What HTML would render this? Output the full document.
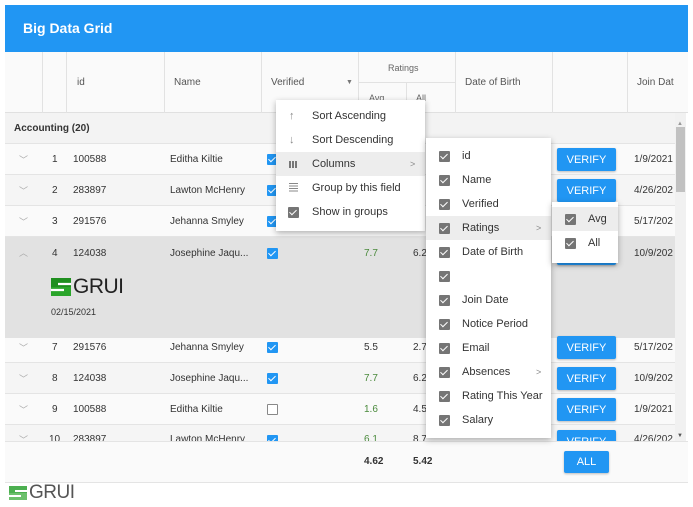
<!DOCTYPE html>
<html><head><meta charset="utf-8"><style>
*{box-sizing:border-box;margin:0;padding:0}
body{width:693px;height:507px;background:#fff;font-family:"Liberation Sans",sans-serif;font-size:10px;color:#333;position:relative;overflow:hidden}
.a{position:absolute}
.t{position:absolute;white-space:nowrap;line-height:14px}
.vl{position:absolute;width:1px;background:#e2e2e2}
.row{position:absolute;left:5px;width:670px;height:31px;border-bottom:1px solid #e4e4e4;overflow:hidden}
.cb{position:absolute;width:11px;height:11px;background:#2196f3;border-radius:1px}
.cb:after{content:"";position:absolute;left:3px;top:1px;width:3px;height:6px;border:solid #fff;border-width:0 1px 1px 0;transform:rotate(45deg)}
.cbe{position:absolute;width:11px;height:11px;border:1px solid #888;background:#fff;border-radius:1px}
.gc{position:absolute;width:11px;height:11px;background:#757575;border-radius:1px}
.gc:after{content:"";position:absolute;left:3px;top:1px;width:3px;height:6px;border:solid #fff;border-width:0 1px 1px 0;transform:rotate(45deg)}
.btn{position:absolute;left:552px;width:59px;height:23px;background:#2196f3;color:#fff;font-size:11px;line-height:24px;text-align:center;border-radius:2px;box-shadow:0 1px 2px rgba(0,0,0,.25)}
.menu{position:absolute;background:#fff;box-shadow:0 2px 6px rgba(0,0,0,.3)}
.mi{position:absolute;left:0;right:0;height:24px;font-size:11px;line-height:25px;color:#333}
</style></head><body>
<div class="a" style="left:5px;top:5px;width:683px;height:47px;background:#2196f3"></div>
<div class="t" style="left:23px;top:20px;font-size:14px;line-height:17px;font-weight:bold;color:#fff">Big Data Grid</div>
<div class="a" style="left:5px;top:52px;width:683px;height:61px;background:#fafafa;border-bottom:1px solid #e0e0e0"></div>
<div class="vl" style="left:42px;top:52px;height:61px"></div>
<div class="vl" style="left:66px;top:52px;height:61px"></div>
<div class="vl" style="left:164px;top:52px;height:61px"></div>
<div class="vl" style="left:261px;top:52px;height:61px"></div>
<div class="vl" style="left:358px;top:52px;height:61px"></div>
<div class="vl" style="left:406px;top:82px;height:31px"></div>
<div class="vl" style="left:455px;top:52px;height:61px"></div>
<div class="vl" style="left:552px;top:52px;height:61px"></div>
<div class="vl" style="left:627px;top:52px;height:61px"></div>
<div class="a" style="left:358px;top:82px;width:97px;height:1px;background:#e2e2e2"></div>
<div class="t" style="left:77px;top:76px;color:#555">id</div>
<div class="t" style="left:174px;top:76px;color:#555">Name</div>
<div class="t" style="left:271px;top:76px;color:#555">Verified</div>
<div class="t" style="left:346px;top:76px;font-size:7px;color:#777">▼</div>
<div class="t" style="left:388px;top:61px;font-size:9px;color:#666">Ratings</div>
<div class="t" style="left:369px;top:91px;font-size:9px;color:#666">Avg</div>
<div class="t" style="left:416px;top:91px;font-size:9px;color:#666">All</div>
<div class="t" style="left:465px;top:76px;color:#555">Date of Birth</div>
<div class="t" style="left:637px;top:76px;color:#555">Join Dat</div>
<div class="a" style="left:5px;top:113px;width:670px;height:31px;background:#f3f3f3;border-bottom:1px solid #e4e4e4"></div>
<div class="t" style="left:14px;top:122px;font-weight:bold;font-size:10px;color:#333">Accounting (20)</div>
<div class="row" style="top:144px;background:#fafafa"></div>
<div class="row" style="top:175px;background:#f5f5f5"></div>
<div class="row" style="top:206px;background:#fafafa"></div>
<div class="a" style="left:5px;top:237px;width:670px;height:101px;background:#e2e2e2"></div>
<div class="row" style="top:338px;background:#fafafa;height:25px"></div>
<div class="row" style="top:363px;background:#f5f5f5"></div>
<div class="row" style="top:394px;background:#fafafa"></div>
<div class="row" style="top:425px;background:#f5f5f5;height:16px;border:0"></div>

<div class="t" style="left:19px;top:153px;color:#aaa;font-size:9px">﹀</div>
<div class="t" style="left:19px;top:184px;color:#aaa;font-size:9px">﹀</div>
<div class="t" style="left:19px;top:215px;color:#aaa;font-size:9px">﹀</div>
<div class="t" style="left:19px;top:246px;color:#aaa;font-size:9px">︿</div>
<div class="t" style="left:19px;top:341px;color:#aaa;font-size:9px">﹀</div>
<div class="t" style="left:19px;top:372px;color:#aaa;font-size:9px">﹀</div>
<div class="t" style="left:19px;top:403px;color:#aaa;font-size:9px">﹀</div>

<div class="t" style="left:52px;top:153px">1</div><div class="t" style="left:73px;top:153px">100588</div><div class="t" style="left:170px;top:153px">Editha Kiltie</div><div class="cb" style="left:267px;top:154px"></div>
<div class="t" style="left:52px;top:184px">2</div><div class="t" style="left:73px;top:184px">283897</div><div class="t" style="left:170px;top:184px">Lawton McHenry</div><div class="cb" style="left:267px;top:185px"></div>
<div class="t" style="left:52px;top:215px">3</div><div class="t" style="left:73px;top:215px">291576</div><div class="t" style="left:170px;top:215px">Jehanna Smyley</div><div class="cb" style="left:267px;top:216px"></div>
<div class="t" style="left:52px;top:247px">4</div><div class="t" style="left:73px;top:247px">124038</div><div class="t" style="left:170px;top:247px">Josephine Jaqu...</div><div class="cb" style="left:267px;top:248px"></div>
<div class="t" style="left:364px;top:247px;color:#4a8a3c">7.7</div><div class="t" style="left:413px;top:247px">6.2</div>
<svg class="a" style="left:51px;top:278px" width="20" height="18"><rect width="20" height="18" fill="#2aa52a"/><rect width="20" height="9" fill="#1f8f1f"/><path d="M7 6H20M0 12H13" stroke="#fff" stroke-width="2.2"/></svg>
<div class="t" style="left:73px;top:276px;font-size:21px;line-height:22px;color:#222;letter-spacing:-0.5px">GRUI</div>
<div class="t" style="left:51px;top:305px;font-size:9px">02/15/2021</div>

<div class="t" style="left:52px;top:341px">7</div><div class="t" style="left:73px;top:341px">291576</div><div class="t" style="left:170px;top:341px">Jehanna Smyley</div><div class="cb" style="left:267px;top:342px"></div>
<div class="t" style="left:364px;top:341px">5.5</div><div class="t" style="left:413px;top:341px">2.7</div>
<div class="t" style="left:52px;top:372px">8</div><div class="t" style="left:73px;top:372px">124038</div><div class="t" style="left:170px;top:372px">Josephine Jaqu...</div><div class="cb" style="left:267px;top:373px"></div>
<div class="t" style="left:364px;top:372px;color:#4a8a3c">7.7</div><div class="t" style="left:413px;top:372px">6.2</div>
<div class="t" style="left:52px;top:403px">9</div><div class="t" style="left:73px;top:403px">100588</div><div class="t" style="left:170px;top:403px">Editha Kiltie</div><div class="cbe" style="left:267px;top:404px"></div>
<div class="t" style="left:364px;top:403px;color:#4a8a3c">1.6</div><div class="t" style="left:413px;top:403px">4.5</div>
<div class="a" style="left:5px;top:425px;width:670px;height:16px;overflow:hidden">
<div class="t" style="left:14px;top:8px;color:#aaa;font-size:9px">﹀</div>
<div class="t" style="left:44px;top:8px">10</div><div class="t" style="left:68px;top:8px">283897</div><div class="t" style="left:165px;top:8px">Lawton McHenry</div><div class="cb" style="left:262px;top:10px"></div><div class="t" style="left:359px;top:8px;color:#4a8a3c">6.1</div><div class="t" style="left:408px;top:8px">8.7</div>
<div class="btn" style="top:5px">VERIFY</div><div class="t" style="left:629px;top:8px">4/26/202</div></div>

<div class="btn" style="top:148px;left:557px">VERIFY</div><div class="t" style="left:634px;top:153px">1/9/2021</div>
<div class="btn" style="top:179px;left:557px">VERIFY</div><div class="t" style="left:634px;top:184px">4/26/202</div>
<div class="t" style="left:634px;top:215px">5/17/202</div>
<div class="btn" style="top:242px;left:557px">VERIFY</div><div class="t" style="left:634px;top:247px">10/9/202</div>
<div class="btn" style="top:336px;left:557px">VERIFY</div><div class="t" style="left:634px;top:341px">5/17/202</div>
<div class="btn" style="top:367px;left:557px">VERIFY</div><div class="t" style="left:634px;top:372px">10/9/202</div>
<div class="btn" style="top:398px;left:557px">VERIFY</div><div class="t" style="left:634px;top:403px">1/9/2021</div>

<div class="a" style="left:675px;top:113px;width:11px;height:328px;background:#f1f1f1"></div>
<div class="a" style="left:676px;top:127px;width:9px;height:65px;background:#c1c1c1"></div>
<div class="t" style="left:677px;top:117px;font-size:6px;color:#999">▲</div>
<div class="t" style="left:677px;top:429px;font-size:6px;color:#555">▼</div>

<div class="a" style="left:5px;top:441px;width:683px;height:42px;background:#fafafa;border-top:1px solid #e4e4e4;border-bottom:1px solid #e4e4e4"></div>
<div class="t" style="left:364px;top:455px;font-weight:bold">4.62</div>
<div class="t" style="left:413px;top:455px;font-weight:bold">5.42</div>
<div class="btn" style="left:564px;top:451px;width:45px;height:22px;line-height:23px">ALL</div>
<svg class="a" style="left:9px;top:486px" width="18" height="14"><rect width="18" height="14" fill="#6cc06c"/><rect width="18" height="7" fill="#4caf50"/><path d="M6 5H18M0 10H12" stroke="#fff" stroke-width="2"/></svg>
<div class="t" style="left:29px;top:483px;font-size:19px;line-height:20px;color:#555;letter-spacing:-0.5px">GRUI</div>

<div class="menu" style="left:276px;top:100px;width:149px;height:131px">
<div class="mi" style="top:4px"><span class="a" style="left:13px;color:#888">↑</span><span class="a" style="left:36px">Sort Ascending</span></div>
<div class="mi" style="top:28px"><span class="a" style="left:13px;color:#888">↓</span><span class="a" style="left:36px">Sort Descending</span></div>
<div class="mi" style="top:52px;background:#ededed"><span class="a" style="left:13px;top:9px;width:9px;height:7px;background:repeating-linear-gradient(90deg,#777 0 2px,#ededed 2px 3px)"></span><span class="a" style="left:36px">Columns</span><span class="a" style="left:134px;color:#888;font-size:9px">&gt;</span></div>
<div class="mi" style="top:76px"><span class="a" style="left:13px;top:7px;width:9px;height:9px;background:repeating-linear-gradient(180deg,#888 0 1px,#fff 1px 2.5px)"></span><span class="a" style="left:36px">Group by this field</span></div>
<div class="mi" style="top:100px"><span class="gc" style="left:12px;top:7px"></span><span class="a" style="left:36px">Show in groups</span></div>
</div>
<div class="menu" style="left:426px;top:138px;width:125px;height:300px">
<div class="mi" style="top:6px"><span class="gc" style="left:13px;top:7px"></span><span class="a" style="left:36px">id</span></div>
<div class="mi" style="top:30px"><span class="gc" style="left:13px;top:7px"></span><span class="a" style="left:36px">Name</span></div>
<div class="mi" style="top:54px"><span class="gc" style="left:13px;top:7px"></span><span class="a" style="left:36px">Verified</span></div>
<div class="mi" style="top:78px;background:#ededed"><span class="gc" style="left:13px;top:7px"></span><span class="a" style="left:36px">Ratings</span><span class="a" style="left:110px;color:#888;font-size:9px">&gt;</span></div>
<div class="mi" style="top:102px"><span class="gc" style="left:13px;top:7px"></span><span class="a" style="left:36px">Date of Birth</span></div>
<div class="mi" style="top:126px"><span class="gc" style="left:13px;top:7px"></span></div>
<div class="mi" style="top:150px"><span class="gc" style="left:13px;top:7px"></span><span class="a" style="left:36px">Join Date</span></div>
<div class="mi" style="top:174px"><span class="gc" style="left:13px;top:7px"></span><span class="a" style="left:36px">Notice Period</span></div>
<div class="mi" style="top:198px"><span class="gc" style="left:13px;top:7px"></span><span class="a" style="left:36px">Email</span></div>
<div class="mi" style="top:222px"><span class="gc" style="left:13px;top:7px"></span><span class="a" style="left:36px">Absences</span><span class="a" style="left:110px;color:#888;font-size:9px">&gt;</span></div>
<div class="mi" style="top:246px"><span class="gc" style="left:13px;top:7px"></span><span class="a" style="left:36px">Rating This Year</span></div>
<div class="mi" style="top:270px"><span class="gc" style="left:13px;top:7px"></span><span class="a" style="left:36px">Salary</span></div>
</div>
<div class="menu" style="left:552px;top:202px;width:66px;height:61px">
<div class="mi" style="top:5px;background:#ededed"><span class="gc" style="left:13px;top:7px"></span><span class="a" style="left:36px">Avg</span></div>
<div class="mi" style="top:29px"><span class="gc" style="left:13px;top:7px"></span><span class="a" style="left:36px">All</span></div>
</div>
</body></html>
